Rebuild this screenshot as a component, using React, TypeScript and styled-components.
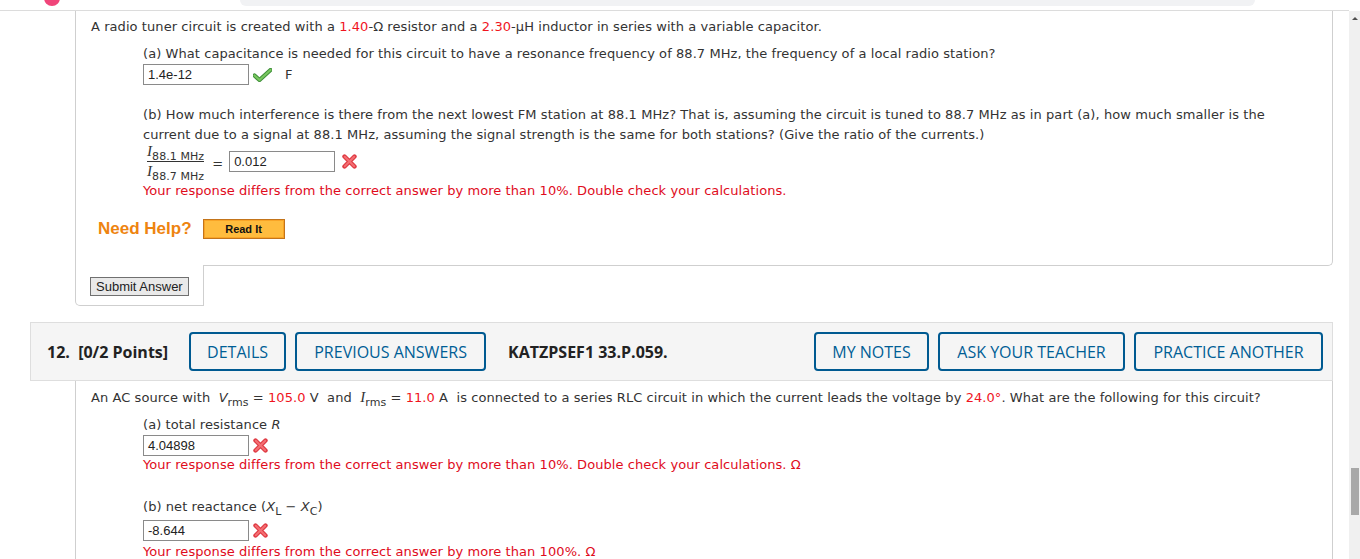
import styled, { createGlobalStyle } from "styled-components";

const GlobalStyle = createGlobalStyle`
  html, body {
    margin: 0;
    padding: 0;
    height: 559px;
    overflow: hidden;
    background: #fff;
  }
  body {
    font-family: "DejaVu Sans", Verdana, sans-serif;
    font-size: 13px;
    letter-spacing: 0.07px;
    color: #333;
  }
`;

const Page = styled.div`
  display: flex;
  height: 559px;
`;

const Main = styled.div`
  flex: 1;
  min-width: 0;
`;

const TopStrip = styled.div`
  display: flex;
  height: 10px;
  border-bottom: 1px solid #dcdcdc;
  overflow: hidden;
`;

const Dot = styled.div`
  width: 16px;
  height: 16px;
  margin: -10px 0 0 44px;
  border-radius: 50%;
  background: #f0457a;
`;

const SearchPill = styled.div`
  width: 1015px;
  height: 6px;
  margin-left: 180px;
  border-radius: 0 0 8px 8px;
  background: #f1f2f4;
`;

const CardBody = styled.div`
  margin: 0 16px 0 75px;
  padding: 6px 15px 0;
  height: 248px;
  border: 1px solid #cfcfcf;
  border-top: none;
  border-bottom-right-radius: 5px;
`;

const SubmitTab = styled.div`
  width: 113px;
  height: 28px;
  margin: -1px 0 0 75px;
  padding: 12px 0 0 14px;
  background: #fff;
  border: 1px solid #cfcfcf;
  border-top: none;
  border-bottom-left-radius: 5px;
`;

const SubmitButton = styled.button`
  font-family: "Liberation Sans", Arial, sans-serif;
  font-size: 13px;
  color: #222;
  height: 19px;
  padding: 0 5px;
  background: #e9e9e9;
  border: 1px solid #707070;
  border-radius: 0;
`;

const Line = styled.p<{ $top?: number }>`
  margin: ${(p) => p.$top ?? 0}px 0 0;
  line-height: 20px;
  white-space: nowrap;
`;

const Indent = styled.div`
  margin-left: 52px;
`;

const Red = styled.span`
  color: #f0141e;
`;

const ErrorText = styled.p<{ $top?: number }>`
  margin: ${(p) => p.$top ?? 0}px 0 0;
  line-height: 18px;
  color: #e00b1c;
  white-space: nowrap;
`;

const AnswerRow = styled.div<{ $top?: number }>`
  display: flex;
  align-items: center;
  gap: 4px;
  margin-top: ${(p) => p.$top ?? 0}px;
`;

const AnswerBox = styled.div<{ $top?: number }>`
  box-sizing: border-box;
  width: 106px;
  height: 21px;
  margin-top: ${(p) => p.$top ?? 0}px;
  padding: 0 4px;
  border: 1px solid #8a8a8a;
  font-family: "Liberation Sans", Arial, sans-serif;
  font-size: 13px;
  letter-spacing: 0;
  line-height: 19px;
  color: #222;
`;

const Unit = styled.span`
  margin-left: 9px;
`;

const MathI = styled.i`
  font-family: "Liberation Serif", "Times New Roman", serif;
  font-size: 15px;
`;

const MathV = styled.i`
  font-style: italic;
`;

const Sub = styled.sub`
  font-size: 11px;
  vertical-align: -4px;
  line-height: 0;
`;

const Fraction = styled.div`
  display: inline-flex;
  flex-direction: column;
  margin-left: 4px;
  line-height: 18px;
`;

const Numerator = styled.span`
  border-bottom: 1px solid #333;
  white-space: nowrap;
`;

const Denominator = styled.span`
  white-space: nowrap;
`;

const FracRow = styled.div`
  display: flex;
  align-items: flex-start;
  margin-top: -3px;
`;

const Equals = styled.span`
  margin: 13px 6px 0 8px;
  line-height: 18px;
`;

const CrossSlot = styled.span`
  margin: 12px 0 0 7px;
`;

const HelpRow = styled.div`
  display: flex;
  align-items: center;
  gap: 11px;
  margin: 19px 0 0 7px;
`;

const HelpLabel = styled.span`
  font-family: "Liberation Sans", Arial, sans-serif;
  font-weight: bold;
  font-size: 17px;
  letter-spacing: 0;
  color: #ee8410;
`;

const ReadItButton = styled.button`
  width: 82px;
  height: 20px;
  padding: 0;
  font-family: "Liberation Sans", Arial, sans-serif;
  font-size: 11px;
  font-weight: bold;
  color: #111;
  background: #ffbc3e;
  border: 1px solid #c3741a;
  box-shadow: inset 0 0 0 1px #f9a426;
`;

const QuestionHeader = styled.div`
  display: flex;
  align-items: center;
  height: 57px;
  margin: 16px 16px 0 30px;
  padding: 0 9px 0 16px;
  background: #f5f5f5;
  border: 1px solid #dedede;
  font-family: "Open Sans", sans-serif;
  font-size: 16px;
  letter-spacing: 0;
  color: #222;
`;

const QNumber = styled.span`
  font-weight: 700;
  margin-right: 21px;
`;

const HeaderButton = styled.button<{ $w: number; $last?: boolean }>`
  box-sizing: border-box;
  width: ${(p) => p.$w}px;
  height: 39px;
  margin-right: ${(p) => (p.$last ? 0 : 9)}px;
  padding: 0;
  font-family: "Open Sans", sans-serif;
  font-size: 16px;
  font-weight: 500;
  color: #005e95;
  background: transparent;
  border: 2px solid #005a91;
  border-radius: 4px;
`;

const RefCode = styled.span`
  margin-left: 13px;
  font-weight: 700;
  flex: 1;
`;

const QuestionBody = styled.div`
  margin: 0 16px 0 75px;
  padding: 6px 15px 0;
  height: 200px;
  border-left: 1px solid #cfcfcf;
  border-right: 1px solid #cfcfcf;
`;

const ScrollTrack = styled.div`
  width: 11px;
  margin-top: 11px;
  background: #f0f0f0;
  display: flex;
  flex-direction: column;
  align-items: center;
`;

const ScrollArrow = styled.div`
  margin-top: 6px;
  width: 0;
  height: 0;
  border-left: 3px solid transparent;
  border-right: 3px solid transparent;
  border-bottom: 3px solid #505050;
`;

const ScrollThumb = styled.div`
  width: 8px;
  height: 47px;
  margin-top: 448px;
  background: #a8a8a8;
`;

const CheckIcon = () => (
  <svg width="19" height="14" viewBox="0 0 19 14">
    <path
      d="M1.5 7.5 L6.5 12 L17.5 2"
      fill="none"
      stroke="#3f8f3a"
      strokeWidth="4.2"
      strokeLinecap="round"
      strokeLinejoin="round"
    />
    <path
      d="M1.5 7.5 L6.5 12 L17.5 2"
      fill="none"
      stroke="#79c75f"
      strokeWidth="2.2"
      strokeLinecap="round"
      strokeLinejoin="round"
    />
  </svg>
);

const CrossIcon = () => (
  <svg width="15" height="15" viewBox="0 0 15 15">
    <path d="M2.5 2.5 L12.5 12.5 M12.5 2.5 L2.5 12.5" stroke="#df3a43" strokeWidth="4.4" strokeLinecap="round" />
    <path d="M2.8 2.8 L12.2 12.2 M12.2 2.8 L2.8 12.2" stroke="#f46f73" strokeWidth="2" strokeLinecap="round" />
  </svg>
);

export default function App() {
  return (
    <>
      <GlobalStyle />
      <Page>
        <Main>
          <TopStrip>
            <Dot />
            <SearchPill />
          </TopStrip>

          <CardBody>
            <Line>
              A radio tuner circuit is created with a <Red>1.40</Red>-Ω resistor and a{" "}
              <Red>2.30</Red>-μH inductor in series with a variable capacitor.
            </Line>
            <Indent>
              <Line $top={7}>
                (a) What capacitance is needed for this circuit to have a resonance frequency of 88.7 MHz,
                the frequency of a local radio station?
              </Line>
              <AnswerRow>
                <AnswerBox>1.4e-12</AnswerBox>
                <CheckIcon />
                <Unit>F</Unit>
              </AnswerRow>

              <Line $top={20}>
                (b) How much interference is there from the next lowest FM station at 88.1 MHz? That is,
                assuming the circuit is tuned to 88.7 MHz as in part (a), how much smaller is the
              </Line>
              <Line>
                current due to a signal at 88.1 MHz, assuming the signal strength is the same for both
                stations? (Give the ratio of the currents.)
              </Line>
              <FracRow>
                <Fraction>
                  <Numerator>
                    <MathI>I</MathI>
                    <Sub>88.1 MHz</Sub>
                  </Numerator>
                  <Denominator>
                    <MathI>I</MathI>
                    <Sub>88.7 MHz</Sub>
                  </Denominator>
                </Fraction>
                <Equals>=</Equals>
                <AnswerBox $top={9}>0.012</AnswerBox>
                <CrossSlot>
                  <CrossIcon />
                </CrossSlot>
              </FracRow>
              <ErrorText $top={1}>
                Your response differs from the correct answer by more than 10%. Double check your
                calculations.
              </ErrorText>
            </Indent>
            <HelpRow>
              <HelpLabel>Need Help?</HelpLabel>
              <ReadItButton>Read It</ReadItButton>
            </HelpRow>
          </CardBody>
          <SubmitTab>
            <SubmitButton>Submit Answer</SubmitButton>
          </SubmitTab>

          <QuestionHeader>
            <QNumber>12.&nbsp; [0/2 Points]</QNumber>
            <HeaderButton $w={97}>DETAILS</HeaderButton>
            <HeaderButton $w={191}>PREVIOUS ANSWERS</HeaderButton>
            <RefCode>KATZPSEF1 33.P.059.</RefCode>
            <HeaderButton $w={115}>MY NOTES</HeaderButton>
            <HeaderButton $w={187}>ASK YOUR TEACHER</HeaderButton>
            <HeaderButton $w={189} $last>
              PRACTICE ANOTHER
            </HeaderButton>
          </QuestionHeader>

          <QuestionBody>
            <Line>
              An AC source with&nbsp; <MathV>V</MathV>
              <Sub>rms</Sub> = <Red>105.0</Red> V&nbsp; and&nbsp; <MathI>I</MathI>
              <Sub>rms</Sub> = <Red>11.0</Red> A&nbsp; is connected to a series RLC circuit in which the
              current leads the voltage by <Red>24.0°</Red>. What are the following for this circuit?
            </Line>
            <Indent>
              <Line $top={7}>
                (a) total resistance <MathV>R</MathV>
              </Line>
              <AnswerRow>
                <AnswerBox>4.04898</AnswerBox>
                <CrossIcon />
              </AnswerRow>
              <ErrorText>
                Your response differs from the correct answer by more than 10%. Double check your
                calculations. Ω
              </ErrorText>
              <Line $top={23}>
                (b) net reactance (<MathV>X</MathV>
                <Sub>L</Sub> − <MathV>X</MathV>
                <Sub>C</Sub>)
              </Line>
              <AnswerRow $top={3}>
                <AnswerBox>-8.644</AnswerBox>
                <CrossIcon />
              </AnswerRow>
              <ErrorText $top={2}>Your response differs from the correct answer by more than 100%. Ω</ErrorText>
            </Indent>
          </QuestionBody>
        </Main>
        <ScrollTrack>
          <ScrollArrow />
          <ScrollThumb />
        </ScrollTrack>
      </Page>
    </>
  );
}
